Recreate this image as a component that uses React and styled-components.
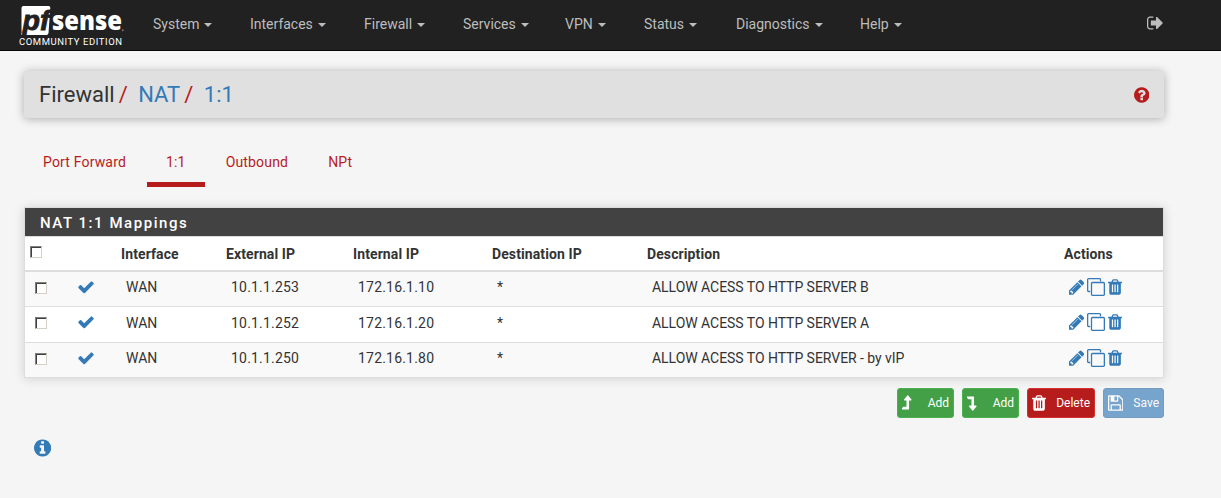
import React from 'react';
import styled, { createGlobalStyle, css } from 'styled-components';

const GlobalStyle = createGlobalStyle`
  * { box-sizing: border-box; }
  body {
    margin: 0;
    background: #f5f5f5;
    color: #333;
    font: 14px/20px Roboto, "Liberation Sans", sans-serif;
  }
  a { color: inherit; text-decoration: none; }
`;

const disc =
  'zM1664 896q0 209-103 385.5t-279.5 279.5-385.5 103-385.5-103-279.5-279.5-103-385.5 103-385.5 279.5-279.5 385.5-103 385.5 103 279.5 279.5 103 385.5z';

const GLYPHS = {
  pencil: {
    box: [128, 1536],
    d: 'M491 1536l91-91-235-235-91 91v107h128v128h107zm523-928q0-22-22-22-10 0-17 7l-542 542q-7 7-7 17 0 22 22 22 10 0 17-7l542-542q7-7 7-17zm-54-192l416 416-832 832h-416v-416zm683 96q0 53-37 90l-166 166-416-416 166-165q36-38 90-38 53 0 91 38l235 234q37 39 37 91z',
  },
  check: {
    box: [0, 1792],
    d: 'M1671 566q0 40-28 68l-724 724-136 136q-28 28-68 28t-68-28l-136-136-362-362q-28-28-28-68t28-68l136-136q28-28 68-28t68 28l294 295 656-657q28-28 68-28t68 28l136 136q28 28 28 68z',
  },
  clone: {
    box: [0, 1792],
    d: 'M1664 1632v-1088q0-13-9.5-22.5t-22.5-9.5h-1088q-13 0-22.5 9.5t-9.5 22.5v1088q0 13 9.5 22.5t22.5 9.5h1088q13 0 22.5-9.5t9.5-22.5zm128-1088v1088q0 66-47 113t-113 47h-1088q-66 0-113-47t-47-113v-1088q0-66 47-113t113-47h1088q66 0 113 47t47 113zm-384-384v160h-128v-160q0-13-9.5-22.5t-22.5-9.5h-1088q-13 0-22.5 9.5t-9.5 22.5v1088q0 13 9.5 22.5t22.5 9.5h160v128h-160q-66 0-113-47t-47-113v-1088q0-66 47-113t113-47h1088q66 0 113 47t47 113z',
  },
  trash: {
    box: [192, 1408],
    d: 'M704 1376v-704q0-14-9-23t-23-9h-64q-14 0-23 9t-9 23v704q0 14 9 23t23 9h64q14 0 23-9t9-23zm256 0v-704q0-14-9-23t-23-9h-64q-14 0-23 9t-9 23v704q0 14 9 23t23 9h64q14 0 23-9t9-23zm256 0v-704q0-14-9-23t-23-9h-64q-14 0-23 9t-9 23v704q0 14 9 23t23 9h64q14 0 23-9t9-23zm-544-992h448l-48-117q-7-9-17-11h-317q-10 2-17 11zm928 32v64q0 14-9 23t-23 9h-96v948q0 83-47 143.5t-113 60.5h-832q-66 0-113-58.5t-47-141.5v-952h-96q-14 0-23-9t-9-23v-64q0-14 9-23t23-9h309l70-167q15-37 54-63t79-26h320q40 0 79 26t54 63l70 167h309q14 0 23 9t9 23z',
  },
  save: {
    box: [128, 1536],
    d: 'M512 1536h768v-384h-768v384zm896 0h128v-896q0-14-10-38.5t-20-34.5l-281-281q-10-10-34-20t-39-10v416q0 40-28 68t-68 28h-576q-40 0-68-28t-28-68v-416h-128v1280h128v-416q0-40 28-68t68-28h832q40 0 68 28t28 68v416zm-384-928v-320q0-13-9.5-22.5t-22.5-9.5h-192q-13 0-22.5 9.5t-9.5 22.5v320q0 13 9.5 22.5t22.5 9.5h192q13 0 22.5-9.5t9.5-22.5zm640 32v928q0 40-28 68t-68 28h-1344q-40 0-68-28t-28-68v-1344q0-40 28-68t68-28h928q40 0 88 20t76 48l280 280q28 28 48 76t20 88z',
  },
  up: {
    box: [384, 1024],
    d: 'M1337 603q-18 37-58 37h-192v864q0 14-9 23t-23 9h-704q-21 0-29-18-8-20 4-35l160-192q9-11 25-11h320v-640h-192q-40 0-58-37-17-37 9-68l320-384q18-22 49-22t49 22l320 384q27 32 9 68z',
  },
  down: {
    box: [384, 1024],
    d: 'M351 256h704q14 0 23 9t9 23v864h192q40 0 58 37 18 36-9 68l-320 384q-18 22-49 22t-49-22l-320-384q-26-31-9-68 18-37 58-37h192v-640h-320q-16 0-25-11l-160-192q-12-15-4-35 8-18 29-18z',
  },
  signOut: {
    box: [64, 1664],
    d: 'M704 1440q0 4 1 20t.5 26.5-3 23.5-10 19.5-20.5 6.5h-320q-119 0-203.5-84.5t-84.5-203.5v-704q0-119 84.5-203.5t203.5-84.5h320q13 0 22.5 9.5t9.5 22.5q0 4 1 20t.5 26.5-3 23.5-10 19.5-20.5 6.5h-320q-66 0-113 47t-47 113v704q0 66 47 113t113 47h312l11.5 1 11.5 3 8 5.5 7 9 2 13.5zm928-544q0 26-19 45l-544 544q-19 19-45 19t-45-19-19-45v-288h-448q-26 0-45-19t-19-45v-384q0-26 19-45t45-19h448v-288q0-26 19-45t45-19 45 19l544 544q19 19 19 45z',
  },
  question: {
    box: [128, 1536],
    d: 'M1024 1376v-192q0-14-9-23t-23-9h-192q-14 0-23 9t-9 23v192q0 14 9 23t23 9h192q14 0 23-9t9-23zm256-672q0-88-55.5-163t-138.5-116-170-41q-243 0-371 213-15 24 8 42l132 100q7 6 19 6 16 0 25-12 53-68 86-92 34-24 86-24 48 0 85.5 26t37.5 59q0 38-20 61t-68 45q-63 28-115.5 86.5t-52.5 125.5v36q0 14 9 23t23 9h192q14 0 23-9t9-23q0-19 21.5-49.5t54.5-49.5q32-18 49-28.5t46-35 44.5-48 28-60.5 12.5-81' + disc,
  },
  info: {
    box: [128, 1536],
    d: 'M1152 1376v-160q0-14-9-23t-23-9h-96v-512q0-14-9-23t-23-9h-320q-14 0-23 9t-9 23v160q0 14 9 23t23 9h96v320h-96q-14 0-23 9t-9 23v160q0 14 9 23t23 9h448q14 0 23-9t9-23zm-128-896v-160q0-14-9-23t-23-9h-192q-14 0-23 9t-9 23v160q0 14 9 23t23 9h192q14 0 23-9t9-23' + disc,
  },
};

const Svg = styled.svg`
  display: block;
  flex: none;
  fill: currentColor;
  fill-rule: evenodd;
`;

function Icon({ name, size = 18 }) {
  const { box: [x, w], d } = GLYPHS[name];
  return (
    <Svg width={(w / 1792) * size} height={size} viewBox={`${x} 0 ${w} 1792`} aria-hidden="true">
      <path d={d} />
    </Svg>
  );
}

const NavBar = styled.header`
  display: flex;
  height: 51px;
  padding-left: 16px;
  background: #212121;
  border-bottom: 1px solid #080808;
`;

const Brand = styled.a`
  width: 118px;
  flex: none;
`;

const Menu = styled.nav`
  display: flex;
  flex: 1;
  padding-left: 19px;
`;

const MenuItem = styled.a`
  display: flex;
  align-items: center;
  width: ${(p) => p.$width}px;
  height: 48px;
  color: #bdbdbd;
  &::after {
    content: '';
    margin: 2px 0 0 5px;
    border: 4px solid transparent;
    border-top-color: currentColor;
    border-bottom: 0;
  }
`;

const Logout = styled.a`
  padding: 13.5px 57px 0 0;
  color: #bdbdbd;
`;

const Page = styled.main`
  width: 1140px;
  margin: 20px 0 0 24px;
`;

const Breadcrumb = styled.div`
  display: flex;
  align-items: center;
  height: 47px;
  padding: 0 15px;
  background: #e0e0e0;
  border-radius: 3px;
  box-shadow: 0 1px 10px rgba(0, 0, 0, 0.3);
  font-size: 22px;
`;

const Crumb = styled.span`
  padding-top: 1px;
  color: ${(p) => (p.$link ? '#337ab7' : '#333')};
`;

const Slash = styled.span`
  margin: 0 10.5px 0 4px;
  padding-top: 1px;
  color: #b71c1c;
`;

const Help = styled.a`
  margin-left: auto;
  color: #b71c1c;
`;

const Tabs = styled.nav`
  display: flex;
  gap: 2px;
  margin-top: 19px;
`;

const Tab = styled.a`
  height: 50px;
  padding: 15px 19px 0;
  color: #b71c1c;
  letter-spacing: 0.17px;
  border-bottom: 5px solid ${(p) => (p.$active ? '#b71c1c' : 'transparent')};
`;

const Panel = styled.section`
  margin-top: 20px;
  background: #fff;
  border: 1px solid #ddd;
  box-shadow: 0 1px 10px rgba(0, 0, 0, 0.15);
`;

const PanelTitle = styled.h2`
  height: 29px;
  margin: 0;
  padding-left: 15px;
  color: #fff;
  background: #424242;
  border-bottom: 1px solid #ddd;
  font-size: 15px;
  font-weight: 500;
  line-height: 30px;
  letter-spacing: 1.55px;
`;

const Table = styled.table`
  width: 100%;
  table-layout: fixed;
  border-spacing: 0;
`;

const Col = styled.col`
  width: ${(p) => (p.$width ? `${p.$width}px` : 'auto')};
`;

const HeadCell = styled.th`
  height: 35px;
  padding: 0 5px;
  border-bottom: 2px solid #ddd;
  font-weight: 700;
  letter-spacing: 0.1px;
  text-align: left;
`;

const Row = styled.tr`
  background: ${(p) => (p.$odd ? '#f9f9f9' : '#fff')};
`;

const Cell = styled.td`
  height: ${(p) => p.$height}px;
  padding: 0 10px ${(p) => p.$lift}px;
  border-bottom: ${(p) => (p.$last ? 0 : 1)}px solid #ddd;
  letter-spacing: ${(p) => p.$spacing || 0}px;
  white-space: nowrap;
`;

const CheckBox = styled.input`
  appearance: none;
  display: block;
  width: 12px;
  height: 12px;
  margin: ${(p) => (p.$head ? '0 0 4px' : '0')};
  background: #fff;
  border: 1px solid;
  border-color: #808080 #d4d0c8 #d4d0c8 #808080;
  box-shadow: inset 1px 1px 0 #404040;
`;

const Status = styled.div`
  margin-left: -1px;
  color: #337ab7;
`;

const Actions = styled.div`
  display: flex;
  align-items: center;
  gap: 2.6px;
  color: #337ab7;
`;

const ButtonBar = styled.div`
  display: flex;
  justify-content: flex-end;
  gap: 8px;
  margin-top: 10px;
`;

const tones = {
  success: css`background: #43a047; border-color: #4caf50;`,
  danger: css`background: #b71c1c; border-color: #d32f2f;`,
  primary: css`background: #337ab7; border-color: #2e6da4; opacity: 0.65;`,
};

const Button = styled.button`
  display: flex;
  align-items: center;
  justify-content: space-between;
  width: ${(p) => p.$width}px;
  height: 30px;
  padding: 0 4px;
  color: #fff;
  border: 1px solid;
  border-radius: 3px;
  font: 12px/18px Roboto, sans-serif;
  ${(p) => tones[p.$tone]}
`;

const InfoLink = styled.a`
  display: inline-block;
  margin: 20px 0 0 10px;
  color: #337ab7;
`;

const MENU = [
  ['System', 97], ['Interfaces', 114], ['Firewall', 99], ['Services', 102],
  ['VPN', 79], ['Status', 92], ['Diagnostics', 124], ['Help', 60],
];

const COLUMNS = [43, 48, 105, 127, 139, 155, 417, null];
const HEADINGS = ['Interface', 'External IP', 'Internal IP', 'Destination IP', 'Description', 'Actions'];
const SPACING = [0, 0.2, 0.2, 0, -0.04];

const MAPPINGS = [
  ['WAN', '10.1.1.253', '172.16.1.10', '*', 'ALLOW ACESS TO HTTP SERVER B'],
  ['WAN', '10.1.1.252', '172.16.1.20', '*', 'ALLOW ACESS TO HTTP SERVER A'],
  ['WAN', '10.1.1.250', '172.16.1.80', '*', 'ALLOW ACESS TO HTTP SERVER - by vIP'],
];

const ROWS = [
  { height: 35, box: 2, text: 4, icon: 5 },
  { height: 36, box: 3, text: 3, icon: 5 },
  { height: 34, box: 2, text: 4, icon: 4 },
];

function Logo() {
  return (
    <svg width="118" height="50" viewBox="0 0 118 50" role="img" aria-label="pfSense Community Edition">
      <path d="M7.500 6H32.500Q34.500 6 34.300 8L32.500 33Q32.300 35 30.500 35H9L11 29.500H7L5.500 32V8Q5.500 6 7.500 6Z" fill="#fff" />
      <path d="M5 34.800L6.500 29.500H10.200L8.700 34.800Z" fill="#fff" />
      <g>
        <text x="6.500" y="29.500" fontFamily="'Liberation Sans', Arial, sans-serif" fontWeight="700" fontSize="28" fontStyle="italic" fill="#212121" stroke="#212121" strokeWidth="0.900" textLength="27" lengthAdjust="spacingAndGlyphs">pf</text>
        <text x="36" y="29.500" fontFamily="'Open Sans', sans-serif" fontWeight="800" fontSize="27" fill="#fff" textLength="70" lengthAdjust="spacingAndGlyphs">sense</text>
      </g>
      <circle cx="106.800" cy="30.300" r="1" fill="#777" />
      <text x="3" y="45" fontFamily="Roboto, sans-serif" fontSize="9.500" fill="#fff" textLength="103">COMMUNITY EDITION</text>
    </svg>
  );
}

export default function App() {
  return (
    <>
      <GlobalStyle />
      <NavBar>
        <Brand href="#"><Logo /></Brand>
        <Menu>
          {MENU.map(([label, width]) => (
            <MenuItem key={label} href="#" $width={width}>{label}</MenuItem>
          ))}
        </Menu>
        <Logout href="#" aria-label="Logout"><Icon name="signOut" /></Logout>
      </NavBar>
      <Page>
        <Breadcrumb>
          <Crumb>Firewall</Crumb>
          <Slash>/</Slash>
          <Crumb as="a" href="#" $link>NAT</Crumb>
          <Slash>/</Slash>
          <Crumb as="a" href="#" $link>1:1</Crumb>
          <Help href="#" aria-label="Help"><Icon name="question" /></Help>
        </Breadcrumb>
        <Tabs>
          {['Port Forward', '1:1', 'Outbound', 'NPt'].map((label) => (
            <Tab key={label} href="#" $active={label === '1:1'}>{label}</Tab>
          ))}
        </Tabs>
        <Panel>
          <PanelTitle>NAT 1:1 Mappings</PanelTitle>
          <Table>
            <colgroup>
              {COLUMNS.map((width, i) => <Col key={i} $width={width} />)}
            </colgroup>
            <thead>
              <tr>
                <HeadCell><CheckBox type="checkbox" $head /></HeadCell>
                <HeadCell />
                {HEADINGS.map((heading) => <HeadCell key={heading}>{heading}</HeadCell>)}
              </tr>
            </thead>
            <tbody>
              {MAPPINGS.map((mapping, i) => {
                const { height, box, text, icon } = ROWS[i];
                const cell = { $height: height, $last: i === 2 };
                return (
                  <Row key={mapping[1]} $odd={i % 2 === 0}>
                    <Cell {...cell} $lift={box}><CheckBox type="checkbox" /></Cell>
                    <Cell {...cell} $lift={icon}><Status><Icon name="check" /></Status></Cell>
                    {mapping.map((value, j) => (
                      <Cell key={j} {...cell} $lift={text} $spacing={SPACING[j]}>{value}</Cell>
                    ))}
                    <Cell {...cell} $lift={icon}>
                      <Actions>
                        <Icon name="pencil" />
                        <Icon name="clone" />
                        <Icon name="trash" />
                      </Actions>
                    </Cell>
                  </Row>
                );
              })}
            </tbody>
          </Table>
        </Panel>
        <ButtonBar>
          <Button $tone="success" $width={57}><Icon name="up" />Add</Button>
          <Button $tone="success" $width={57}><Icon name="down" />Add</Button>
          <Button $tone="danger" $width={68}><Icon name="trash" />Delete</Button>
          <Button $tone="primary" $width={61}><Icon name="save" />Save</Button>
        </ButtonBar>
        <InfoLink href="#" aria-label="Info"><Icon name="info" size={20} /></InfoLink>
      </Page>
    </>
  );
}
